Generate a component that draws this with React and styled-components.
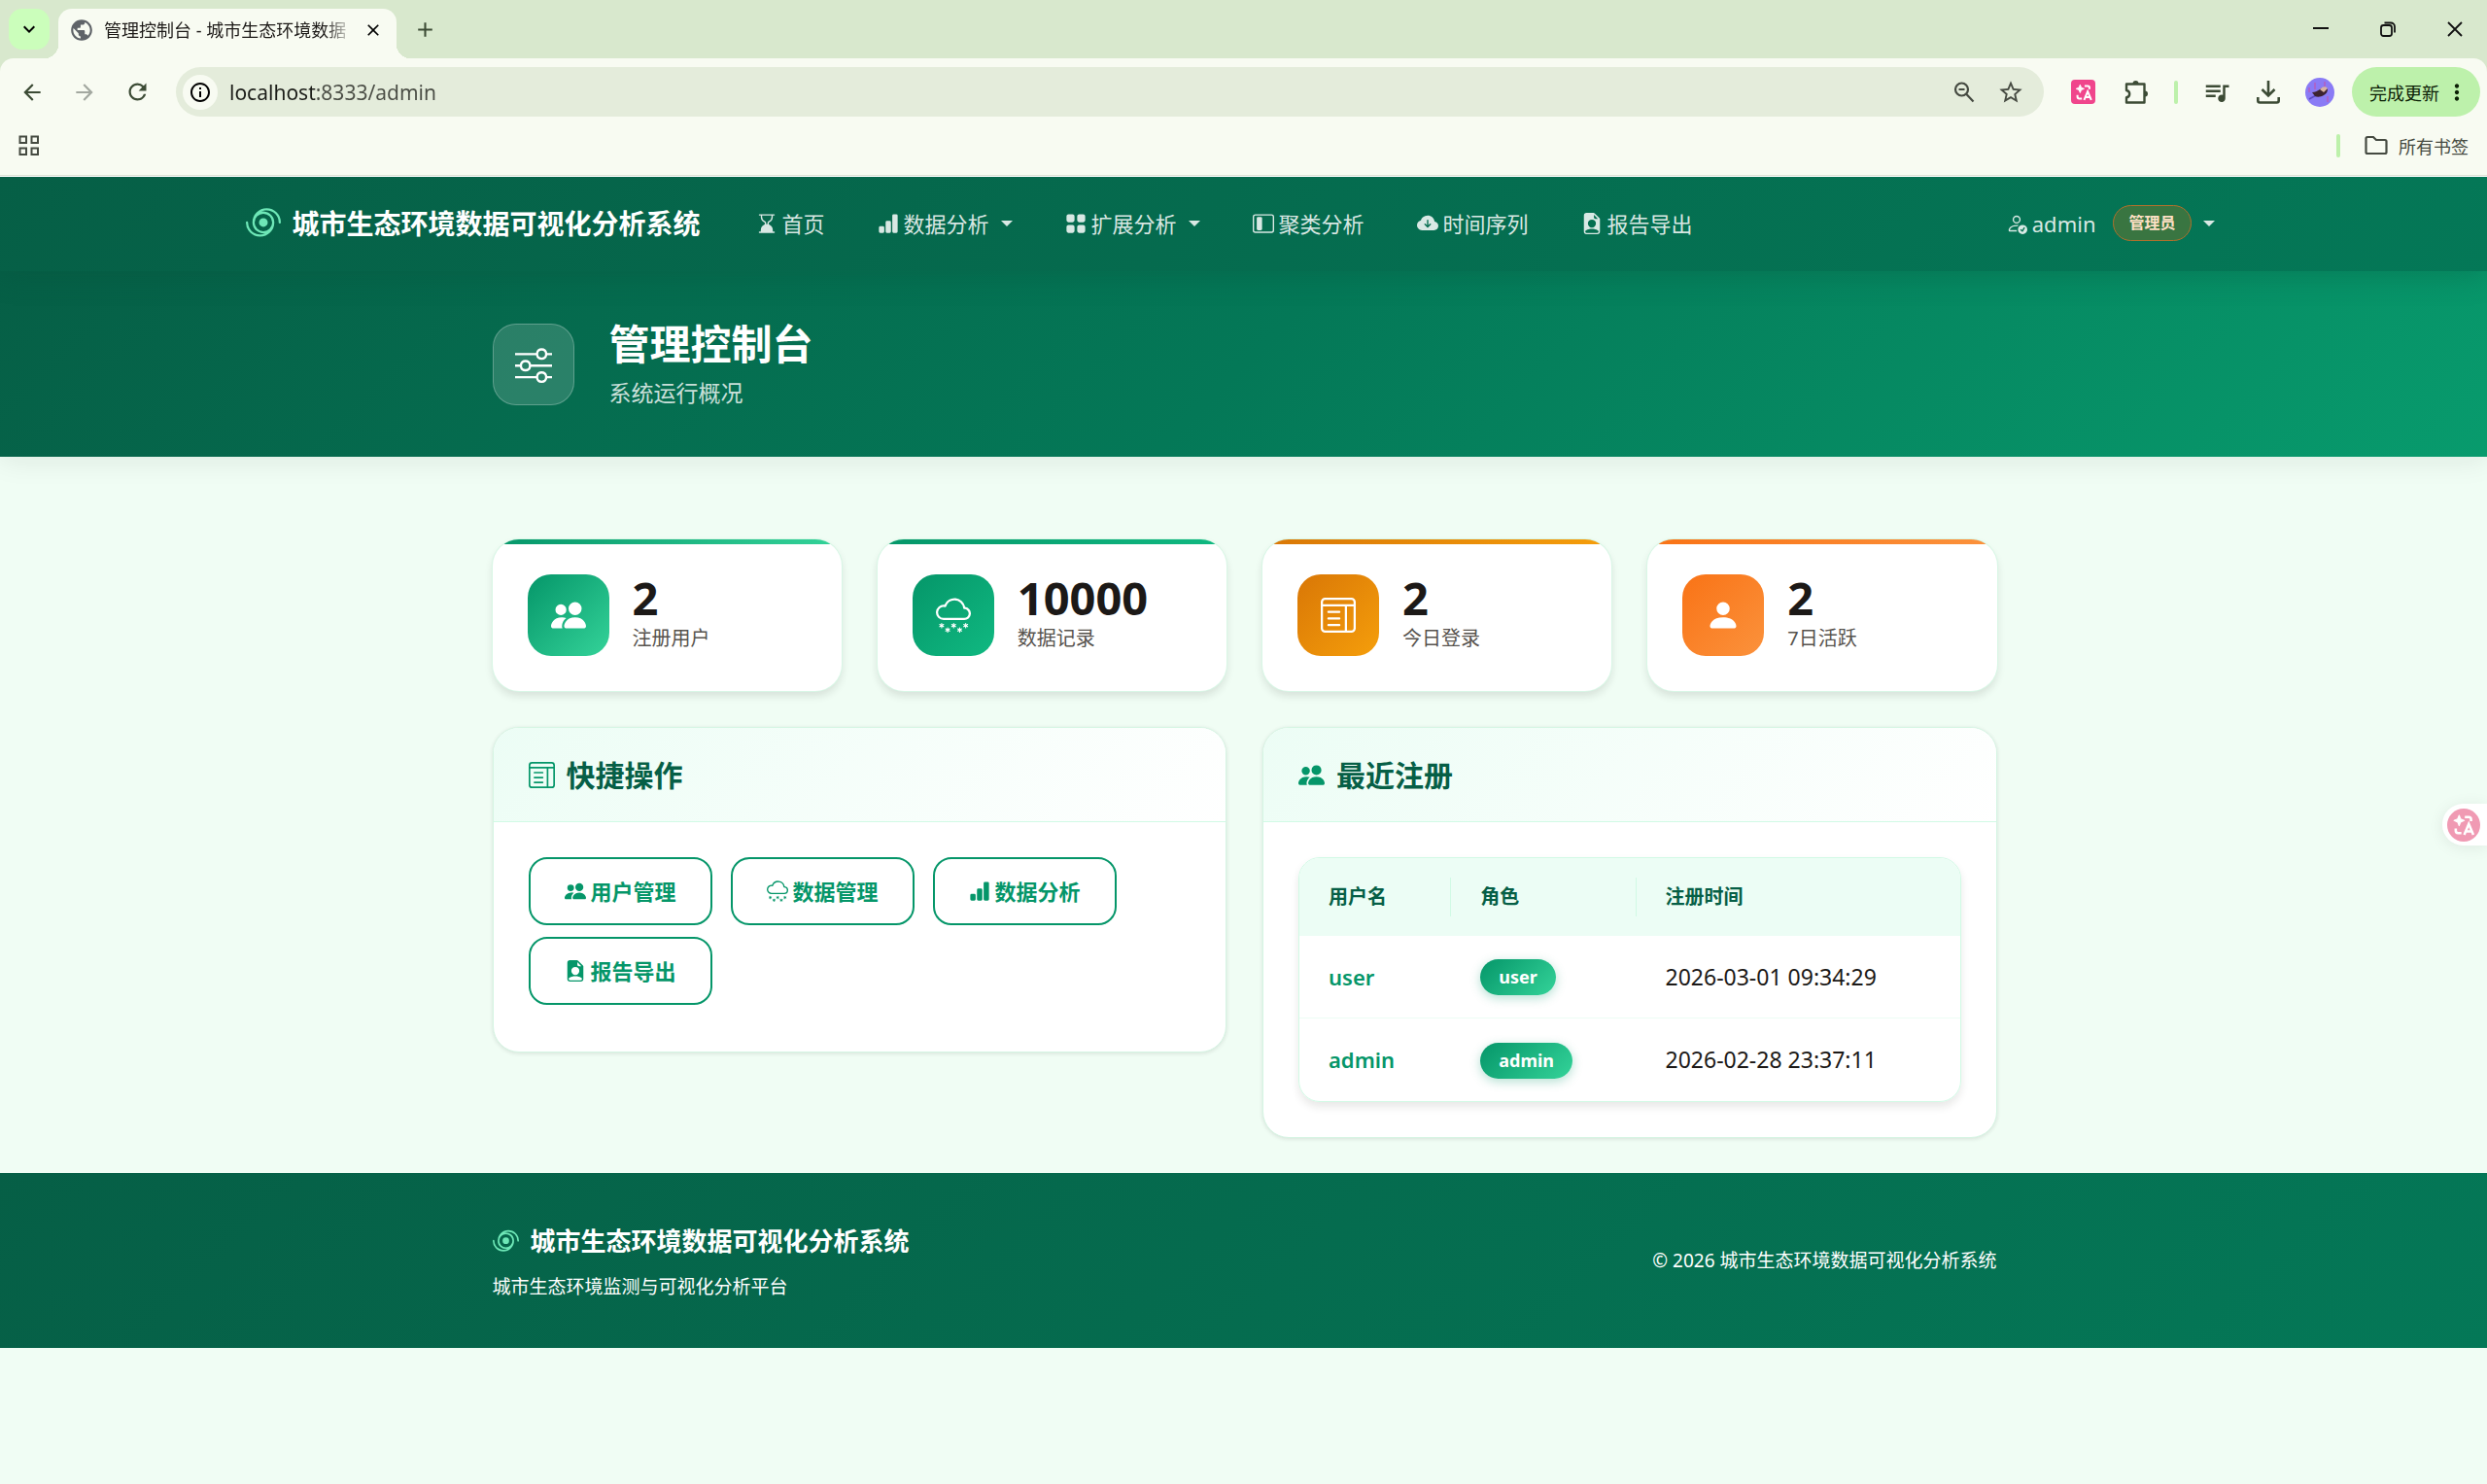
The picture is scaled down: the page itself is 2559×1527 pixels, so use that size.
import React from 'react';
import styled, { createGlobalStyle } from 'styled-components';
import {
	BsTropicalStorm,
	BsHourglassBottom,
	BsBarChartFill,
	BsGridFill,
	BsLayoutSidebarInset,
	BsCloudArrowDownFill,
	BsFileEarmarkPersonFill,
	BsPersonCheck,
	BsSliders,
	BsPeopleFill,
	BsPersonFill,
	BsCloudSnow,
	BsLayoutTextWindow,
} from 'react-icons/bs';
import {
	MdArrowBack,
	MdArrowForward,
	MdRefresh,
	MdInfoOutline,
	MdStarBorder,
	MdQueueMusic,
	MdMoreVert,
	MdClose,
	MdAdd,
	MdKeyboardArrowDown,
	MdPublic,
} from 'react-icons/md';

const navItems = [
	{ icon: BsHourglassBottom, label: '首页' },
	{ icon: BsBarChartFill, label: '数据分析', caret: true },
	{ icon: BsGridFill, label: '扩展分析', caret: true },
	{ icon: BsLayoutSidebarInset, label: '聚类分析' },
	{ icon: BsCloudArrowDownFill, label: '时间序列' },
	{ icon: BsFileEarmarkPersonFill, label: '报告导出' },
];

const stats = [
	{ icon: BsPeopleFill, value: '2', label: '注册用户', from: '#059669', to: '#34d399' },
	{ icon: BsCloudSnow, value: '10000', label: '数据记录', from: '#059669', to: '#10b981' },
	{ icon: BsLayoutTextWindow, value: '2', label: '今日登录', from: '#d97706', to: '#f59e0b' },
	{ icon: BsPersonFill, value: '2', label: '7日活跃', from: '#f97316', to: '#fb923c' },
];

const actions = [
	{ icon: BsPeopleFill, label: '用户管理' },
	{ icon: BsCloudSnow, label: '数据管理' },
	{ icon: BsBarChartFill, label: '数据分析' },
	{ icon: BsFileEarmarkPersonFill, label: '报告导出' },
];

const users = [
	{ name: 'user', role: 'user', time: '2026-03-01 09:34:29' },
	{ name: 'admin', role: 'admin', time: '2026-02-28 23:37:11' },
];

const PuzzleIcon = () => (
	<svg width="28" height="28" viewBox="0 0 28 28" fill="none">
		<path
			d="M4 5.500h18.500v19H4v-5.200c2-.4 3.200-1.700 3.200-3.600S6 12.400 4 12z"
			stroke="#3c4b35"
			strokeWidth="2.400"
			strokeLinejoin="round"
		/>
		<path d="M10.500 5a3 3 0 0 1 6 0zM23 12.500a3 3 0 0 1 0 6z" fill="#3c4b35" />
	</svg>
);

const TranslateIcon = ({ size }) => (
	<svg width={size} height={size} viewBox="0 0 24 24" fill="none" stroke="#fff">
		<path
			d="M8 3.500l1.300 3.200L12.500 8l-3.200 1.300L8 12.500 6.700 9.300 3.500 8l3.200-1.300z"
			fill="#fff"
			strokeWidth="1"
			strokeLinejoin="round"
		/>
		<path d="M13 5h3.500a2 2 0 0 1 2 2v1.500M5 15v2a2 2 0 0 0 2 2h3" strokeWidth="2.200" />
		<path d="M12.500 20.500l4-9.500 4 9.500M14 17.500h5" strokeWidth="2.200" />
	</svg>
);

const DownloadIcon = () => (
	<svg width="26" height="26" viewBox="0 0 26 26" fill="none" stroke="#3c4b35" strokeWidth="2.600">
		<path d="M13 1v15M6.500 10l6.500 6.500 6.500-6.500M2.300 18v3.500a2 2 0 0 0 2 2h17.400a2 2 0 0 0 2-2V18" />
	</svg>
);

const ZoomOutIcon = () => (
	<svg width="24" height="24" viewBox="0 0 24 24" fill="none" stroke="#454a41" strokeWidth="2.200">
		<circle cx="9.500" cy="9" r="6.500" />
		<path d="M14.200 13.700L21.500 21.500M6.500 9h6" />
	</svg>
);

const AppsIcon = () => (
	<svg width="22" height="22" viewBox="0 0 22 22" fill="none" stroke="#454a41" strokeWidth="2">
		<path d="M1.500 1.500h6.500v6.500h-6.500zM13.500 1.500h6.500v6.500h-6.500zM1.500 13.500h6.500v6.500h-6.500zM13.500 13.500h6.500v6.500h-6.500z" />
	</svg>
);

const FolderIcon = () => (
	<svg width="24" height="22" viewBox="0 0 24 22" fill="none" stroke="#454a41" strokeWidth="2.200">
		<path d="M1.500 3.500a1.500 1.500 0 0 1 1.500-1.500h6l3 3h9a1.500 1.500 0 0 1 1.500 1.500v11a1.500 1.500 0 0 1-1.500 1.500h-18a1.500 1.500 0 0 1-1.500-1.500z" />
	</svg>
);

const RestoreIcon = () => (
	<svg width="16" height="16" viewBox="0 0 16 16" fill="none" stroke="#111" strokeWidth="1.800">
		<rect x="1" y="4" width="11" height="11" rx="2.500" />
		<path d="M4.500 1.500h6.500a4 4 0 0 1 4 4v6" />
	</svg>
);

const AvatarIcon = () => (
	<svg width="30" height="30" viewBox="0 0 30 30">
		<circle cx="15" cy="15" r="15" fill="#8a7bf5" />
		<path d="M4 22l9-5" stroke="#5a4bc4" strokeWidth="1.500" />
		<path d="M10 5v7M23 19v6M4 10v5M20 4v5" stroke="#b45fc0" strokeWidth="1.500" />
		<path d="M7 15c3 0 5-1 8-3 3-3 7-3 8 0 0 3-2 5-4 6-3 2-7 2-9 1z" fill="#3d2331" />
		<path d="M15 12c2-3 6-4 8-1l-4 4z" fill="#d9b3a5" />
	</svg>
);

const BrowserChrome = () => (
	<Chrome>
		<TabStrip>
			<TabSearch aria-label="搜索标签页">
				<MdKeyboardArrowDown size={24} />
			</TabSearch>
			<Tab>
				<MdPublic size={26} color="#5f6368" />
				<TabTitle>管理控制台 - 城市生态环境数据</TabTitle>
				<PlainButton aria-label="关闭标签页">
					<MdClose size={20} />
				</PlainButton>
			</Tab>
			<PlainButton aria-label="新标签页">
				<MdAdd size={25} color="#3c4b35" />
			</PlainButton>
			<WindowControls>
				<PlainButton aria-label="最小化">
					<svg width="16" height="16">
						<path d="M0 7h16" stroke="#111" strokeWidth="2" />
					</svg>
				</PlainButton>
				<PlainButton aria-label="还原">
					<RestoreIcon />
				</PlainButton>
				<PlainButton aria-label="关闭">
					<svg width="16" height="16">
						<path d="M1 1l14 14M15 1L1 15" stroke="#111" strokeWidth="1.800" />
					</svg>
				</PlainButton>
			</WindowControls>
		</TabStrip>
		<Toolbar>
			<NavButtons>
				<PlainButton aria-label="后退">
					<MdArrowBack size={26} color="#3c4b35" />
				</PlainButton>
				<PlainButton aria-label="前进">
					<MdArrowForward size={26} color="#a3a8a0" />
				</PlainButton>
				<PlainButton aria-label="重新加载">
					<MdRefresh size={27} color="#3c4b35" />
				</PlainButton>
			</NavButtons>
			<AddressBar>
				<SiteInfo aria-label="网站信息">
					<MdInfoOutline size={24} />
				</SiteInfo>
				<AddressInput aria-label="地址" defaultValue="localhost:8333/admin" />
				<PlainButton aria-label="缩放">
					<ZoomOutIcon />
				</PlainButton>
				<PlainButton aria-label="收藏">
					<MdStarBorder size={28} color="#454a41" />
				</PlainButton>
			</AddressBar>
			<Extensions>
				<TranslateBadge aria-label="翻译">
					<TranslateIcon size={22} />
				</TranslateBadge>
				<PlainButton aria-label="扩展程序">
					<PuzzleIcon />
				</PlainButton>
				<Separator />
				<PlainButton aria-label="媒体">
					<MdQueueMusic size={30} color="#3c4b35" />
				</PlainButton>
				<PlainButton aria-label="下载">
					<DownloadIcon />
				</PlainButton>
				<PlainButton aria-label="用户">
					<AvatarIcon />
				</PlainButton>
			</Extensions>
			<UpdateButton>
				完成更新
				<MdMoreVert size={26} />
			</UpdateButton>
		</Toolbar>
		<BookmarkBar>
			<PlainButton aria-label="应用">
				<AppsIcon />
			</PlainButton>
			<AllBookmarks>
				<Separator />
				<BookmarkButton>
					<FolderIcon />
					所有书签
				</BookmarkButton>
			</AllBookmarks>
		</BookmarkBar>
	</Chrome>
);

const App = () => (
	<>
		<GlobalStyle />
		<BrowserChrome />
		<Navbar>
			<NavContainer>
				<Brand href="#">
					<BsTropicalStorm size={36} />
					城市生态环境数据可视化分析系统
				</Brand>
				<NavList>
					{navItems.map(({ icon: Icon, label, caret }) => (
						<NavLink href="#" key={label}>
							<Icon size={22} />
							<span>{label}</span>
							{caret && <Caret />}
						</NavLink>
					))}
				</NavList>
				<UserMenu>
					<BsPersonCheck size={22} />
					<span>admin</span>
					<RoleTag>管理员</RoleTag>
					<Caret />
				</UserMenu>
			</NavContainer>
		</Navbar>
		<Hero>
			<HeroInner>
				<HeroIcon>
					<BsSliders size={38} />
				</HeroIcon>
				<div>
					<HeroTitle>管理控制台</HeroTitle>
					<HeroSubtitle>系统运行概况</HeroSubtitle>
				</div>
			</HeroInner>
		</Hero>
		<Main>
			<StatGrid>
				{stats.map(({ icon: Icon, value, label, from, to }) => (
					<StatCard key={label} $from={from} $to={to}>
						<StatIcon $from={from} $to={to}>
							<Icon size={36} />
						</StatIcon>
						<div>
							<StatValue>{value}</StatValue>
							<StatLabel>{label}</StatLabel>
						</div>
					</StatCard>
				))}
			</StatGrid>
			<PanelGrid>
				<Panel>
					<PanelHeader>
						<BsLayoutTextWindow size={27} />
						<PanelTitle>快捷操作</PanelTitle>
					</PanelHeader>
					<ActionList>
						{actions.map(({ icon: Icon, label }) => (
							<ActionLink href="#" key={label}>
								<Icon size={22} />
								{label}
							</ActionLink>
						))}
					</ActionList>
				</Panel>
				<Panel>
					<PanelHeader>
						<BsPeopleFill size={27} />
						<PanelTitle>最近注册</PanelTitle>
					</PanelHeader>
					<PanelBody>
						<TableWrap>
							<Table>
								<thead>
									<tr>
										<Th $width="23%">用户名</Th>
										<Th $width="28%">角色</Th>
										<Th>注册时间</Th>
									</tr>
								</thead>
								<tbody>
									{users.map(user => (
										<tr key={user.name}>
											<NameCell>{user.name}</NameCell>
											<Td>
												<RoleBadge>{user.role}</RoleBadge>
											</Td>
											<Td>{user.time}</Td>
										</tr>
									))}
								</tbody>
							</Table>
						</TableWrap>
					</PanelBody>
				</Panel>
			</PanelGrid>
		</Main>
		<Footer>
			<FooterInner>
				<div>
					<FooterBrand>
						<BsTropicalStorm size={27} />
						城市生态环境数据可视化分析系统
					</FooterBrand>
					<FooterText>城市生态环境监测与可视化分析平台</FooterText>
				</div>
				<FooterText>© 2026 城市生态环境数据可视化分析系统</FooterText>
			</FooterInner>
		</Footer>
		<FloatingButton aria-label="翻译页面">
			<FloatingIcon>
				<TranslateIcon size={28} />
			</FloatingIcon>
		</FloatingButton>
	</>
);

export default App;

const GlobalStyle = createGlobalStyle`
	* {
		box-sizing: border-box;
	}
	body {
		margin: 0;
		background: #f0fdf4;
		color: #1c1917;
		font-family: 'Noto Sans', 'Noto Sans CJK SC', sans-serif;
		font-size: 22px;
		line-height: 1.5;
	}
	svg {
		flex-shrink: 0;
		display: block;
	}
	a {
		text-decoration: none;
	}
	button,
	input {
		font-family: inherit;
	}
`;

const Chrome = styled.header`
	position: relative;
	z-index: 2;
	background: #d8e8cd;
	border-bottom: 1px solid #fff;
`;

const TabStrip = styled.div`
	display: flex;
	align-items: center;
	height: 60px;
	padding: 0 25px 0 9px;
	gap: 9px;
`;

const PlainButton = styled.button`
	display: flex;
	align-items: center;
	padding: 0;
	border: 0;
	background: none;
	cursor: pointer;
`;

const TabSearch = styled(PlainButton)`
	justify-content: center;
	width: 42px;
	height: 42px;
	border-radius: 14px;
	background: #cbfebb;
`;

const Tab = styled.div`
	position: relative;
	display: flex;
	align-items: center;
	align-self: flex-end;
	gap: 10px;
	width: 348px;
	height: 51px;
	margin-right: 8px;
	padding: 0 14px 8px 11px;
	border-radius: 14px 14px 0 0;
	background: #f8fbf2;

	&::before,
	&::after {
		content: '';
		position: absolute;
		bottom: 0;
		width: 14px;
		height: 14px;
	}
	&::before {
		right: 100%;
		background: radial-gradient(circle at 0 0, transparent 14px, #f8fbf2 14px);
	}
	&::after {
		left: 100%;
		background: radial-gradient(circle at 100% 0, transparent 14px, #f8fbf2 14px);
	}
`;

const TabTitle = styled.span`
	flex: 1;
	white-space: nowrap;
	font-size: 18px;
	line-height: 30px;
	mask-image: linear-gradient(to right, #000 88%, transparent);
`;

const WindowControls = styled.div`
	display: flex;
	gap: 53px;
	margin-left: auto;
`;

const Toolbar = styled.div`
	display: flex;
	align-items: center;
	height: 69px;
	padding: 0 7px 0 20px;
	border-radius: 14px 14px 0 0;
	background: #f8fbf2;
`;

const NavButtons = styled.div`
	display: flex;
	gap: 28px;
	margin-right: 26px;
`;

const AddressBar = styled.div`
	display: flex;
	align-items: center;
	flex: 1;
	height: 51px;
	padding: 0 20px 0 7px;
	gap: 22px;
	border-radius: 26px;
	background: #e4ecdb;
`;

const SiteInfo = styled(PlainButton)`
	justify-content: center;
	width: 36px;
	height: 36px;
	margin-right: -10px;
	border-radius: 50%;
	background: #f8fbf2;
`;

const AddressInput = styled.input`
	flex: 1;
	padding: 0;
	border: 0;
	outline: 0;
	font-size: 21px;
	line-height: 30px;
	color: #1b1d18;
	background: linear-gradient(to right, #1b1d18 90px, #4a4d45 90px);
	background-clip: text;
	-webkit-text-fill-color: transparent;
`;

const Extensions = styled.div`
	display: flex;
	align-items: center;
	gap: 25px;
	margin: 0 18px 0 28px;
`;

const TranslateBadge = styled(PlainButton)`
	justify-content: center;
	width: 25px;
	height: 25px;
	margin-right: 3px;
	border-radius: 4px;
	background: #f0458c;
`;

const Separator = styled.span`
	width: 4px;
	height: 24px;
	border-radius: 2px;
	background: #bdf1ab;
`;

const UpdateButton = styled(PlainButton)`
	gap: 5px;
	height: 51px;
	padding: 0 11px 0 18px;
	border-radius: 26px;
	background: #bdf1ab;
	font-size: 18px;
	color: #0b2005;
`;

const BookmarkBar = styled.div`
	display: flex;
	align-items: center;
	justify-content: space-between;
	height: 52px;
	padding: 0 19px 9px;
	border-bottom: 1px solid #dde2d6;
	background: #f8fbf2;
`;

const AllBookmarks = styled.div`
	display: flex;
	align-items: center;
	gap: 25px;
`;

const BookmarkButton = styled(PlainButton)`
	gap: 11px;
	font-size: 18px;
	color: #454a41;
`;

const Navbar = styled.nav`
	position: relative;
	z-index: 1;
	background: linear-gradient(135deg, #065f46, #047857);
	box-shadow: 0 5px 27px rgba(6, 78, 59, 0.3);
`;

const NavContainer = styled.div`
	display: flex;
	align-items: center;
	max-width: 2054px;
	height: 97px;
	margin: 0 auto;
	padding: 0 28px 2px 0;
`;

const Brand = styled.a`
	display: flex;
	align-items: center;
	gap: 12px;
	margin-right: 57px;
	color: #fff;
	font-size: 28px;
	font-weight: 700;

	svg {
		color: #6ee7b7;
	}
`;

const NavList = styled.div`
	display: flex;
	gap: 54px;
`;

const NavLink = styled.a`
	display: flex;
	align-items: center;
	gap: 5px;
	color: rgba(255, 255, 255, 0.85);
	line-height: 32px;
`;

const Caret = styled.i`
	margin-left: 7px;
	border: 6px solid transparent;
	border-top-color: currentColor;
	border-bottom: 0;
`;

const UserMenu = styled.button`
	display: flex;
	align-items: center;
	gap: 5px;
	margin-left: auto;
	padding: 0;
	border: 0;
	background: none;
	color: rgba(255, 255, 255, 0.85);
	font-size: 22px;
	line-height: 32px;
`;

const RoleTag = styled.span`
	margin-left: 13px;
	padding: 0 15px;
	border: 1px solid #b0702c;
	border-radius: 19px;
	background: rgba(217, 119, 6, 0.25);
	color: #fde0c4;
	font-size: 16px;
	font-weight: 600;
	line-height: 35px;
`;

const Hero = styled.section`
	padding: 45px 0;
	background: linear-gradient(135deg, #065f46 0%, #047857 50%, #089b6d 100%);
	box-shadow: 0 5px 27px rgba(28, 25, 23, 0.08);
`;

const HeroInner = styled.div`
	display: flex;
	align-items: center;
	gap: 36px;
	max-width: 1550px;
	margin: 0 auto;
	padding-left: 2px;
`;

const HeroIcon = styled.div`
	display: flex;
	align-items: center;
	justify-content: center;
	width: 84px;
	height: 84px;
	border: 1px solid rgba(255, 255, 255, 0.25);
	border-radius: 24px;
	background: rgba(255, 255, 255, 0.15);
	color: #fff;
`;

const HeroTitle = styled.h1`
	margin: 0;
	color: #fff;
	font-size: 42px;
	font-weight: 700;
	line-height: 59px;
`;

const HeroSubtitle = styled.p`
	margin: 0;
	color: rgba(255, 255, 255, 0.8);
	font-size: 23px;
	line-height: 42px;
`;

const Main = styled.main`
	max-width: 1550px;
	margin: 0 auto;
	padding: 85px 0 36px 2px;
`;

const StatGrid = styled.div`
	display: grid;
	grid-template-columns: repeat(4, 1fr);
	gap: 37px;
`;

const StatCard = styled.div`
	display: flex;
	align-items: center;
	gap: 24px;
	padding: 36px;
	border-radius: 27px;
	background: linear-gradient(90deg, ${p => p.$from}, ${p => p.$to}) top / 100% 5px no-repeat #fff;
	box-shadow: 0 0 0 1px #d9f7e6, 0 5px 9px rgba(28, 25, 23, 0.12);
`;

const StatIcon = styled.div`
	display: flex;
	align-items: center;
	justify-content: center;
	width: 84px;
	height: 84px;
	border-radius: 24px;
	background: linear-gradient(135deg, ${p => p.$from}, ${p => p.$to});
	color: #fff;
`;

const StatValue = styled.div`
	font-size: 47px;
	font-weight: 700;
	line-height: 48px;
`;

const StatLabel = styled.div`
	color: #57534e;
	font-size: 20px;
	line-height: 36px;
`;

const PanelGrid = styled.div`
	display: grid;
	grid-template-columns: 1fr 1fr;
	align-items: start;
	gap: 37px;
	margin-top: 37px;
`;

const Panel = styled.section`
	overflow: hidden;
	border: 1px solid #d5f5e3;
	border-radius: 27px;
	background: #fff;
	box-shadow: 0 1px 4px rgba(28, 25, 23, 0.12);
`;

const PanelHeader = styled.div`
	display: flex;
	align-items: center;
	gap: 12px;
	height: 97px;
	padding: 0 36px;
	border-bottom: 1px solid #d1fae5;
	background: linear-gradient(135deg, #ecfdf5, #fff);
	color: #059669;
`;

const PanelTitle = styled.h2`
	margin: 0;
	padding-top: 2px;
	color: #065f46;
	font-size: 30px;
	font-weight: 700;
	line-height: 44px;
`;

const PanelBody = styled.div`
	padding: 36px;
`;

const ActionList = styled.div`
	display: flex;
	flex-wrap: wrap;
	gap: 12px 19px;
	padding: 36px 36px 48px;
`;

const ActionLink = styled.a`
	display: flex;
	align-items: center;
	gap: 5px;
	height: 70px;
	padding: 0 35px;
	border: 2px solid #059669;
	border-radius: 19px;
	color: #059669;
	font-weight: 700;
`;

const TableWrap = styled.div`
	overflow: hidden;
	border: 1px solid #d1fae5;
	border-radius: 22px;
	box-shadow: 0 5px 9px rgba(28, 25, 23, 0.1);
`;

const Table = styled.table`
	width: 100%;
	border-spacing: 0;
	text-align: left;
`;

const Th = styled.th`
	width: ${p => p.$width || 'auto'};
	height: 80px;
	padding: 0 30px;
	background: #ecfdf5;
	color: #065f46;
	font-size: 20px;
	font-weight: 700;

	&:not(:last-child) {
		background: linear-gradient(#d1fae5, #d1fae5) right center / 1px 50% no-repeat #ecfdf5;
	}
`;

const Td = styled.td`
	height: 85px;
	padding: 0 30px;
	font-size: 23px;

	tr:not(:last-child) > & {
		border-bottom: 1px solid #ecfdf5;
	}
`;

const NameCell = styled(Td)`
	color: #059669;
	font-size: 22px;
	font-weight: 600;
`;

const RoleBadge = styled.span`
	display: inline-block;
	padding: 0 19px;
	border-radius: 19px;
	background: linear-gradient(135deg, #059669, #34d399);
	box-shadow: 0 3px 11px rgba(5, 150, 105, 0.3);
	color: #fff;
	font-size: 18px;
	font-weight: 700;
	line-height: 37px;
	vertical-align: middle;
`;

const Footer = styled.footer`
	padding: 43px 0;
	background: linear-gradient(135deg, #065f46, #047857);
	color: #fff;
`;

const FooterInner = styled.div`
	display: flex;
	align-items: center;
	justify-content: space-between;
	max-width: 1550px;
	margin: 0 auto;
	padding-left: 2px;
`;

const FooterBrand = styled.div`
	display: flex;
	align-items: center;
	gap: 12px;
	font-size: 26px;
	font-weight: 700;
	line-height: 54px;

	svg {
		color: #6ee7b7;
	}
`;

const FooterText = styled.div`
	font-size: 19px;
	line-height: 40px;
`;

const FloatingButton = styled.button`
	position: fixed;
	top: 827px;
	right: 0;
	display: flex;
	align-items: center;
	height: 43px;
	padding: 0 7px 0 5px;
	border: 0;
	border-radius: 22px 0 0 22px;
	background: #fff;
	box-shadow: 0 2px 16px rgba(28, 25, 23, 0.08);
`;

const FloatingIcon = styled.span`
	display: flex;
	align-items: center;
	justify-content: center;
	width: 34px;
	height: 34px;
	border-radius: 50%;
	background: #f09ab3;
`;
